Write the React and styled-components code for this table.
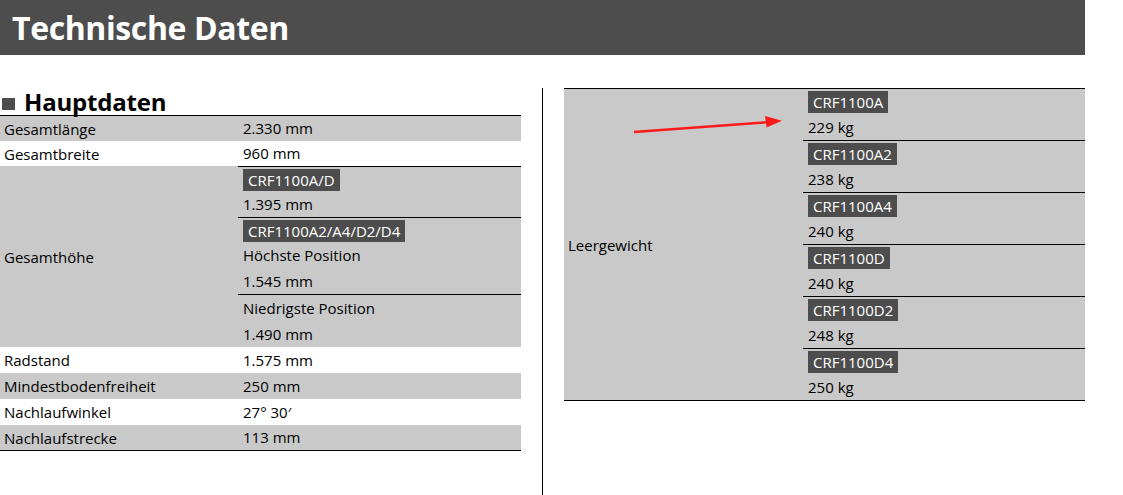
import React from "react";
import styled, { createGlobalStyle } from "styled-components";

const GlobalStyle = createGlobalStyle`
  html, body {
    margin: 0;
    padding: 0;
    background: #ffffff;
  }
  body {
    font-family: "Open Sans", "Noto Sans", Arial, sans-serif;
    color: #000000;
  }
`;

const Page = styled.div`
  width: 1085px;
  min-height: 100vh;
  display: flex;
  flex-direction: column;
`;

const TitleBar = styled.div`
  height: 55px;
  background: #4d4d4d;
  display: flex;
  align-items: center;
  padding-left: 12px;
`;

const Title = styled.h1`
  margin: 0;
  color: #ffffff;
  font-size: 32px;
  font-weight: 700;
  letter-spacing: -0.4px;
`;

const Columns = styled.div`
  flex: 1;
  display: grid;
  grid-template-columns: 521px 1px 521px;
  column-gap: 21px;
  margin-top: 33px;
`;

const Divider = styled.div`
  background: #000000;
  align-self: stretch;
`;

const Column = styled.div`
  position: relative;
`;

const SectionTitle = styled.h2`
  margin: 0;
  height: 27px;
  display: flex;
  align-items: center;
  gap: 9px;
  padding-left: 2px;
  font-size: 24px;
  font-weight: 700;
  color: #000000;
  line-height: 27px;
  letter-spacing: -0.2px;

  &::before {
    content: "";
    width: 13px;
    height: 12px;
    margin-top: 4px;
    background: #4d4d4d;
  }
`;

const Table = styled.div`
  border-top: 1px solid #000000;
  border-bottom: 1px solid #000000;
  font-size: 15px;
`;

const Row = styled.div`
  display: flex;
  background: ${(p) => (p.$shaded ? "#c9c9c9" : "#ffffff")};
`;

const Label = styled.div`
  width: ${(p) => p.$width}px;
  flex-shrink: 0;
  display: flex;
  align-items: center;
  padding-left: ${(p) => p.$pad}px;
  box-sizing: border-box;
`;

const Value = styled.div`
  flex: 1;
  display: flex;
  flex-direction: column;
`;

const Group = styled.div`
  border-top: ${(p) => (p.$ruled ? "1px solid #000000" : "none")};
  padding-left: 5px;
`;

const Line = styled.div`
  height: ${(p) => p.$h || 26}px;
  line-height: ${(p) => p.$h || 26}px;
  white-space: nowrap;
`;

const BadgeLine = styled.div`
  height: ${(p) => p.$h}px;
  padding-top: 2px;
  box-sizing: border-box;
`;

const Badge = styled.span`
  display: inline-block;
  height: 22px;
  line-height: 22px;
  padding: 0 5px;
  background: #4d4d4d;
  color: #ffffff;
  font-size: 15px;
`;

const Arrow = styled.svg`
  position: absolute;
  left: 66px;
  top: 28px;
  overflow: visible;
`;

const mainRows = [
  { label: "Gesamtlänge", value: "2.330 mm", shaded: true, h: 25 },
  { label: "Gesamtbreite", value: "960 mm", h: 25 },
  {
    label: "Gesamthöhe",
    shaded: true,
    groups: [
      { badge: "CRF1100A/D", lines: ["1.395 mm"] },
      { badge: "CRF1100A2/A4/D2/D4", lines: ["Höchste Position", "1.545 mm"] },
      { lines: ["Niedrigste Position", "1.490 mm"] },
    ],
  },
  { label: "Radstand", value: "1.575 mm" },
  { label: "Mindestbodenfreiheit", value: "250 mm", shaded: true },
  { label: "Nachlaufwinkel", value: "27° 30′" },
  { label: "Nachlaufstrecke", value: "113 mm", shaded: true, h: 25 },
];

const weights = [
  { badge: "CRF1100A", lines: ["229 kg"] },
  { badge: "CRF1100A2", lines: ["238 kg"] },
  { badge: "CRF1100A4", lines: ["240 kg"] },
  { badge: "CRF1100D", lines: ["240 kg"] },
  { badge: "CRF1100D2", lines: ["248 kg"] },
  { badge: "CRF1100D4", lines: ["250 kg"] },
];

const GroupBlock = ({ group, ruled, badgeHeight }) => (
  <Group $ruled={ruled}>
    {group.badge && (
      <BadgeLine $h={badgeHeight}>
        <Badge>{group.badge}</Badge>
      </BadgeLine>
    )}
    {group.lines.map((l) => (
      <Line key={l}>{l}</Line>
    ))}
  </Group>
);

const App = () => {
  return (
    <Page>
      <GlobalStyle />
      <TitleBar>
        <Title>Technische Daten</Title>
      </TitleBar>
      <Columns>
        <Column>
          <SectionTitle>Hauptdaten</SectionTitle>
          <Table>
            {mainRows.map((row) => (
              <Row key={row.label} $shaded={row.shaded}>
                <Label $width={238} $pad={4}>
                  {row.label}
                </Label>
                <Value>
                  {row.groups ? (
                    row.groups.map((g, i) => (
                      <GroupBlock key={i} group={g} ruled badgeHeight={24} />
                    ))
                  ) : (
                    <Group>
                      <Line $h={row.h}>{row.value}</Line>
                    </Group>
                  )}
                </Value>
              </Row>
            ))}
          </Table>
        </Column>
        <Divider />
        <Column>
          <Table>
            <Row $shaded>
              <Label $width={239} $pad={4}>
                Leergewicht
              </Label>
              <Value>
                {weights.map((g, i) => (
                  <GroupBlock key={g.badge} group={g} ruled={i > 0} badgeHeight={25} />
                ))}
              </Value>
            </Row>
          </Table>
          <Arrow width="160" height="20" viewBox="0 0 160 20">
            <line x1="4" y1="16" x2="140" y2="6" stroke="#ff1a1a" strokeWidth="2.4" />
            <polygon points="152,4.8 135,0 136.5,11.5" fill="#ff1a1a" />
          </Arrow>
        </Column>
      </Columns>
    </Page>
  );
};

export default App;
